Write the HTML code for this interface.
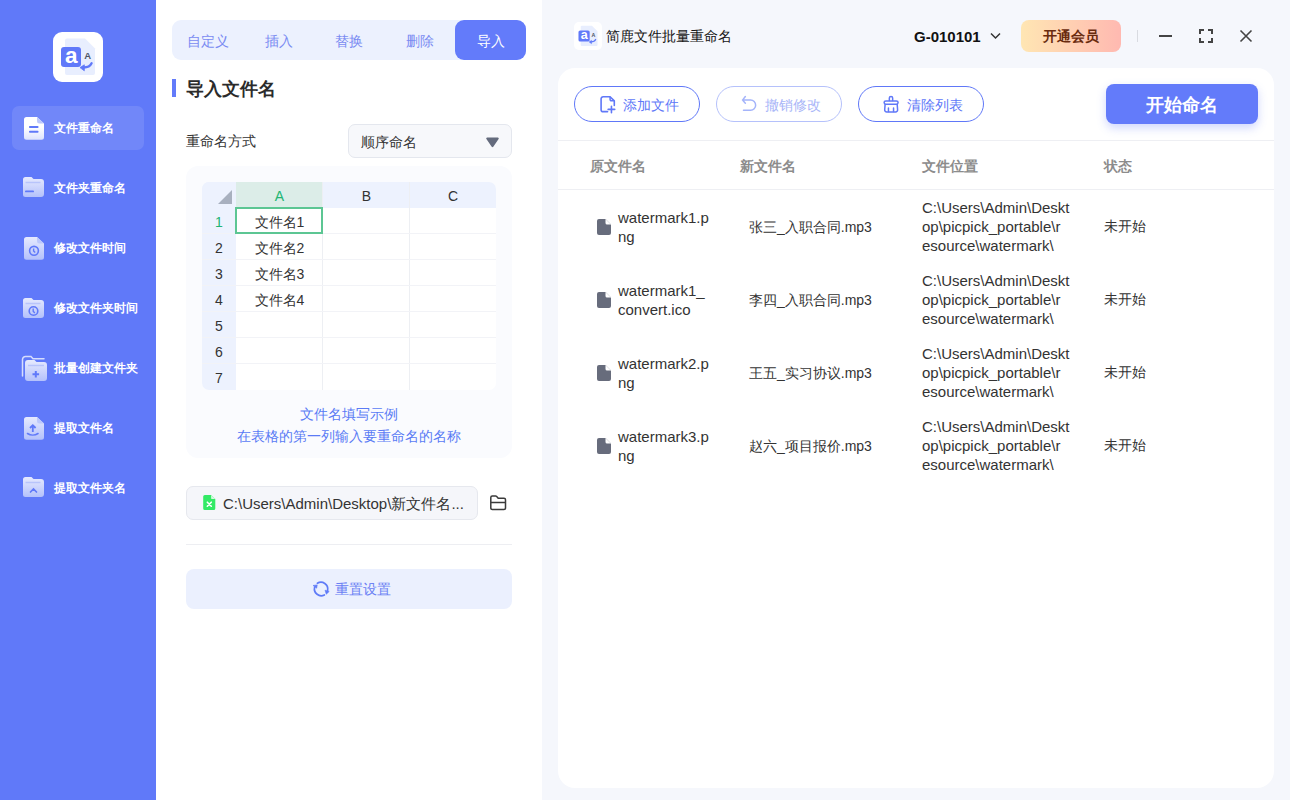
<!DOCTYPE html>
<html><head><meta charset="utf-8">
<style>
*{box-sizing:border-box;margin:0;padding:0}
html,body{width:1290px;height:800px;overflow:hidden;background:#fff}
body{font-family:"Liberation Sans",sans-serif;font-size:14px;color:#333;position:relative}
.abs{position:absolute}
.t{position:absolute;white-space:nowrap;line-height:1}
#side{left:0;top:0;width:156px;height:800px;background:#6079F9}
#mid{left:156px;top:0;width:386px;height:800px;background:#fff}
#right{left:542px;top:0;width:748px;height:800px;background:#F5F7FC}
.mi{position:absolute;left:12px;width:132px;height:44px;border-radius:7px}
.mi .lbl{position:absolute;left:42px;top:0;line-height:44px;color:#fff;font-weight:bold;font-size:12px;white-space:nowrap}
.mi svg{position:absolute;left:10px;top:10px}
.cellc{position:absolute;height:26px;line-height:28px;text-align:center;font-size:14px;color:#333;white-space:nowrap}
.btn{position:absolute;top:86px;width:126px;height:36px;border:1px solid #6078F8;border-radius:18px;color:#6078F8}
.btn.dis{border-color:#B5C1FB;color:#A9B6F8}
.bl{position:absolute;top:1px;line-height:34px;font-size:14px;white-space:nowrap}
.th{top:156px;font-size:14px;font-weight:bold;color:#8C8C8C;line-height:20px}
.td{position:absolute;white-space:nowrap;font-size:15px;line-height:19px;color:#333}
.tab{position:absolute;top:21px;height:40px;line-height:40px;text-align:center;color:#7A8BF2;font-size:14px}
</style></head><body>

<!-- SIDEBAR -->
<div id="side" class="abs">
  <div class="abs" style="left:53px;top:32px;width:50px;height:50px;background:#fff;border-radius:9px">
    <svg width="50" height="50" viewBox="0 0 50 50" style="position:absolute;left:0;top:0">
      <path d="M14 6.5h18l10 10V41a2 2 0 0 1-2 2H14a2 2 0 0 1-2-2V8.5a2 2 0 0 1 2-2z" fill="#E8EEFE"/>
      <rect x="8" y="15" width="20" height="20" rx="3" fill="#6079F9"/>
      <text x="18.2" y="31" text-anchor="middle" font-family="Liberation Sans" font-weight="bold" font-size="22.5" fill="#fff">a</text>
      <text x="34.6" y="26.8" text-anchor="middle" font-family="Liberation Sans" font-weight="bold" font-size="9.5" fill="#4F5565">A</text>
      <path d="M38.6 31.2c-1.2 2.6-3.8 4.2-8 4.3" stroke="#6079F9" stroke-width="2.3" fill="none" stroke-linecap="round"/>
      <path d="M27 35.6l4.3-2.8v6z" fill="#6079F9" stroke="#6079F9" stroke-width="0.8" stroke-linejoin="round"/>
    </svg>
  </div>

  <div class="mi" style="top:106px;background:rgba(255,255,255,0.11)">
    <svg width="24" height="26" viewBox="0 0 24 26" style="left:11px;top:10px">
      <defs><linearGradient id="gw" x1="0" y1="0" x2="0" y2="1"><stop offset="0.45" stop-color="#fff"/><stop offset="1" stop-color="#DDE3FD"/></linearGradient></defs>
      <path d="M3.5 1h10.5l7 6.5V21.3a2.5 2.5 0 0 1-2.5 2.5H3.5A2.5 2.5 0 0 1 1 21.3V3.5A2.5 2.5 0 0 1 3.5 1z" fill="url(#gw)"/>
      <path d="M14 1v4a2.5 2.5 0 0 0 2.5 2.5H21z" fill="#BCC8FC"/>
      <rect x="6" y="10" width="9.5" height="2" rx="0.8" fill="#6079F9"/>
      <rect x="6" y="14.8" width="9.5" height="2" rx="0.8" fill="#6079F9"/>
    </svg>
    <div class="lbl">文件重命名</div>
  </div>

  <div class="mi" style="top:166px">
    <svg width="24" height="24" viewBox="0 0 24 24" style="left:10px;top:10px">
      <defs><linearGradient id="gf" x1="0" y1="0" x2="0" y2="1"><stop offset="0" stop-color="#E6EAFE"/><stop offset="1" stop-color="#B4C1FB"/></linearGradient></defs>
      <path d="M3 1h6.5l2 2H19a3 3 0 0 1 3 3V18a3 3 0 0 1-3 3H3.5A2.5 2.5 0 0 1 1 18.5V3.5A2.5 2.5 0 0 1 3.5 1z" fill="url(#gf)"/>
      <path d="M3.5 6.5h15" stroke="#B8C4FB" stroke-width="1.5"/>
      <rect x="3" y="14.5" width="9" height="1.8" rx="0.9" fill="#6079F9"/>
    </svg>
    <div class="lbl">文件夹重命名</div>
  </div>

  <div class="mi" style="top:226px">
    <svg width="24" height="26" viewBox="0 0 24 26" style="left:11px;top:10px">
      <path d="M3.5 1h10.5l7 6.5V21.3a2.5 2.5 0 0 1-2.5 2.5H3.5A2.5 2.5 0 0 1 1 21.3V3.5A2.5 2.5 0 0 1 3.5 1z" fill="url(#gf)"/>
      <path d="M14 1v4a2.5 2.5 0 0 0 2.5 2.5H21z" fill="#BCC8FC"/>
      <circle cx="11" cy="14.8" r="4.4" stroke="#6079F9" stroke-width="1.6" fill="none"/>
      <path d="M10.6 12.4v2.6l1.6 1.6" stroke="#6079F9" stroke-width="1.4" fill="none"/>
    </svg>
    <div class="lbl">修改文件时间</div>
  </div>

  <div class="mi" style="top:286px">
    <svg width="24" height="24" viewBox="0 0 24 24" style="left:10px;top:11px">
      <path d="M3 1h6.5l2 2H19a3 3 0 0 1 3 3V18a3 3 0 0 1-3 3H3.5A2.5 2.5 0 0 1 1 18.5V3.5A2.5 2.5 0 0 1 3.5 1z" fill="url(#gf)"/>
      <path d="M3.5 6.5h15" stroke="#B8C4FB" stroke-width="1.5"/>
      <circle cx="11.5" cy="14" r="4.3" stroke="#6079F9" stroke-width="1.6" fill="none"/>
      <path d="M11.2 11.5v2.8l1.6 1.6" stroke="#6079F9" stroke-width="1.4" fill="none"/>
    </svg>
    <div class="lbl">修改文件夹时间</div>
  </div>

  <div class="mi" style="top:346px">
    <svg width="28" height="28" viewBox="0 0 28 28" style="left:9px;top:8px">
      <path d="M1.5 22V5.5a3 3 0 0 1 3-3h5.5l2 2.2H23" stroke="#D6DDFD" stroke-width="1.5" fill="none" stroke-linecap="round"/>
      <path d="M7 6h6.5l2 2H23a3 3 0 0 1 3 3V24a3 3 0 0 1-3 3H7a3 3 0 0 1-3-3V9a3 3 0 0 1 3-3z" fill="url(#gf)"/>
      <path d="M7 11.5h16" stroke="#B8C4FB" stroke-width="1.5"/>
      <path d="M14.8 17v6.6M11.5 20.3h6.6" stroke="#6079F9" stroke-width="2"/>
    </svg>
    <div class="lbl">批量创建文件夹</div>
  </div>

  <div class="mi" style="top:406px">
    <svg width="24" height="26" viewBox="0 0 24 26" style="left:11px;top:10px">
      <path d="M3.5 1h10.5l7 6.5V21.3a2.5 2.5 0 0 1-2.5 2.5H3.5A2.5 2.5 0 0 1 1 21.3V3.5A2.5 2.5 0 0 1 3.5 1z" fill="url(#gf)"/>
      <path d="M14 1v4a2.5 2.5 0 0 0 2.5 2.5H21z" fill="#BCC8FC"/>
      <path d="M9.8 16V9.5M7 12l2.8-2.8 2.8 2.8" stroke="#6079F9" stroke-width="1.8" fill="none"/>
      <path d="M4.5 17.5c3 2 7.5 2 10.5 0" stroke="#6079F9" stroke-width="1.6" fill="none" stroke-linecap="round"/>
    </svg>
    <div class="lbl">提取文件名</div>
  </div>

  <div class="mi" style="top:466px">
    <svg width="24" height="24" viewBox="0 0 24 24" style="left:10px;top:10px">
      <path d="M3 1h6.5l2 2H19a3 3 0 0 1 3 3V18a3 3 0 0 1-3 3H3.5A2.5 2.5 0 0 1 1 18.5V3.5A2.5 2.5 0 0 1 3.5 1z" fill="url(#gf)"/>
      <path d="M3.5 6.5h15" stroke="#B8C4FB" stroke-width="1.5"/>
      <path d="M8.5 16l3-3 3 3" stroke="#6079F9" stroke-width="1.7" fill="none" stroke-linecap="round"/>
    </svg>
    <div class="lbl">提取文件夹名</div>
  </div>
</div>

<!-- MIDDLE -->
<div id="mid" class="abs"></div>
<!-- tabs -->
<div class="abs" style="left:172px;top:20px;width:354px;height:40px;background:#ECF1FE;border-radius:9px"></div>
<div class="abs" style="left:455px;top:20px;width:71px;height:40px;background:#637BFA;border-radius:9px"></div>
<div class="tab" style="left:172px;width:71px">自定义</div>
<div class="tab" style="left:243px;width:71px">插入</div>
<div class="tab" style="left:313px;width:71px">替换</div>
<div class="tab" style="left:384px;width:71px">删除</div>
<div class="tab" style="left:455px;width:71px;color:#fff">导入</div>
<!-- section title -->
<div class="abs" style="left:172px;top:79px;width:4px;height:18px;background:#637BFA"></div>
<div class="t" style="left:186px;top:79px;font-size:18px;font-weight:bold;color:#2B2B2B;line-height:20px">导入文件名</div>
<!-- rename mode -->
<div class="t" style="left:186px;top:131px;font-size:14px;color:#333;line-height:20px">重命名方式</div>
<div class="abs" style="left:348px;top:124px;width:164px;height:34px;background:#F7F8FB;border:1px solid #E4E7EE;border-radius:7px"></div>
<div class="t" style="left:361px;top:132px;font-size:14px;color:#333;line-height:20px">顺序命名</div>
<svg class="abs" style="left:486px;top:137px" width="13" height="11" viewBox="0 0 13 11"><path d="M1.2 0.5h10.6c0.8 0 1.2 0.8 0.8 1.5L7.3 9.8c-0.4 0.6-1.2 0.6-1.6 0L0.4 2C0 1.3 0.4 0.5 1.2 0.5z" fill="#646B7D"/></svg>
<!-- example card -->
<div class="abs" style="left:186px;top:166px;width:326px;height:292px;background:#FAFBFE;border-radius:12px"></div>
<div class="abs" id="sheet" style="left:202px;top:182px;width:294px;height:208px;background:#fff;border-radius:7px;overflow:hidden">
  <div class="abs" style="left:0;top:0;width:294px;height:26px;background:#EDF2FE"></div>
  <div class="abs" style="left:0;top:0;width:34px;height:208px;background:#EDF2FE"></div>
  <div class="abs" style="left:34px;top:0;width:87px;height:26px;background:#DCEDE8"></div>
  <svg class="abs" style="left:16px;top:8px" width="14" height="14" viewBox="0 0 14 14"><path d="M14 0V14H0z" fill="#A8B0BF"/></svg>
  <!-- grid lines -->
  <div class="abs" style="left:120px;top:0;width:1px;height:208px;background:#EDEFF3"></div>
  <div class="abs" style="left:207px;top:0;width:1px;height:208px;background:#EDEFF3"></div>
  <div class="abs" style="left:0;top:51px;width:294px;height:1px;background:#F2F3F7"></div>
  <div class="abs" style="left:0;top:77px;width:294px;height:1px;background:#F2F3F7"></div>
  <div class="abs" style="left:0;top:103px;width:294px;height:1px;background:#F2F3F7"></div>
  <div class="abs" style="left:0;top:129px;width:294px;height:1px;background:#F2F3F7"></div>
  <div class="abs" style="left:0;top:155px;width:294px;height:1px;background:#F2F3F7"></div>
  <div class="abs" style="left:0;top:181px;width:294px;height:1px;background:#F2F3F7"></div>
  <div class="abs" style="left:33px;top:25px;width:88px;height:27px;border:2px solid #5CC693"></div>
  <div class="cellc" style="left:34px;top:0;width:87px;color:#22B573">A</div>
  <div class="cellc" style="left:121px;top:0;width:87px">B</div>
  <div class="cellc" style="left:208px;top:0;width:86px">C</div>
  <div class="cellc" style="left:0;top:26px;width:34px;color:#22B573">1</div>
  <div class="cellc" style="left:0;top:52px;width:34px">2</div>
  <div class="cellc" style="left:0;top:78px;width:34px">3</div>
  <div class="cellc" style="left:0;top:104px;width:34px">4</div>
  <div class="cellc" style="left:0;top:130px;width:34px">5</div>
  <div class="cellc" style="left:0;top:156px;width:34px">6</div>
  <div class="cellc" style="left:0;top:182px;width:34px">7</div>
  <div class="cellc" style="left:34px;top:26px;width:87px">文件名1</div>
  <div class="cellc" style="left:34px;top:52px;width:87px">文件名2</div>
  <div class="cellc" style="left:34px;top:78px;width:87px">文件名3</div>
  <div class="cellc" style="left:34px;top:104px;width:87px">文件名4</div>
</div>
<div class="t" style="left:186px;top:404px;width:326px;text-align:center;color:#5B7BF5;font-size:14px;line-height:20px">文件名填写示例</div>
<div class="t" style="left:186px;top:426px;width:326px;text-align:center;color:#5B7BF5;font-size:14px;line-height:20px">在表格的第一列输入要重命名的名称</div>
<!-- path -->
<div class="abs" style="left:186px;top:486px;width:292px;height:34px;background:#F5F6FA;border:1px solid #E6E8EE;border-radius:7px"></div>
<svg class="abs" style="left:197px;top:491px" width="24" height="24" viewBox="0 0 24 24"><path d="M7.8 3.9H14.1L18.3 8.1V17.4a1.6 1.6 0 0 1-1.6 1.6H7.8a1.6 1.6 0 0 1-1.6-1.6V5.5a1.6 1.6 0 0 1 1.6-1.6z" fill="#33EA66"/><path d="M14.1 3.9V6.9a1.2 1.2 0 0 0 1.2 1.2H18.3z" fill="#D6F9E0"/><path d="M10.3 11.2L14.3 15.2M14.3 11.2L10.3 15.2" stroke="#fff" stroke-width="1.6" stroke-linecap="round"/></svg>
<div class="t" style="left:223px;top:494px;font-size:15px;color:#333;line-height:20px">C:\Users\Admin\Desktop\新文件名...</div>
<svg class="abs" style="left:486px;top:491px" width="24" height="24" viewBox="0 0 24 24"><path d="M4.8 17.1V6.6a1.5 1.5 0 0 1 1.5-1.5H9.6a1.5 1.5 0 0 1 1.1 0.5l1.5 1.75H18a1.5 1.5 0 0 1 1.5 1.5V17.1a1.5 1.5 0 0 1-1.5 1.5H6.3a1.5 1.5 0 0 1-1.5-1.5zM4.8 11.4H19.5" stroke="#3A3A3A" stroke-width="1.5" fill="none" stroke-linejoin="round"/></svg>
<div class="abs" style="left:186px;top:544px;width:326px;height:1px;background:#EDEEF2"></div>
<!-- reset -->
<div class="abs" style="left:186px;top:569px;width:326px;height:40px;background:#EBF0FE;border-radius:8px"></div>
<svg class="abs" style="left:309px;top:577px" width="24" height="24" viewBox="0 0 24 24"><g stroke="#5F7BF7" stroke-width="1.7" fill="none" stroke-linecap="round"><path d="M8.4 6.3A6.8 6.8 0 0 1 18.6 13.4"/><path d="M15.4 17.9A6.8 6.8 0 0 1 5.6 10.4"/></g><path d="M16 13.2L20.2 14.4 17.3 17.2z" fill="#5F7BF7" stroke="#5F7BF7" stroke-width="0.6" stroke-linejoin="round"/><path d="M4 8.5L8.2 7.9 7.7 11.2z" fill="#5F7BF7" stroke="#5F7BF7" stroke-width="0.6" stroke-linejoin="round"/></svg>
<div class="t" style="left:335px;top:579px;font-size:14px;color:#6A80F4;line-height:20px">重置设置</div>


<!-- RIGHT -->
<div id="right" class="abs"></div>
<!-- title bar -->
<div class="abs" style="left:574px;top:22px;width:28px;height:28px;background:#fff;border-radius:5px">
  <svg width="28" height="28" viewBox="0 0 50 50" style="position:absolute;left:0;top:0">
    <path d="M14 6.5h18l10 10V41a2 2 0 0 1-2 2H14a2 2 0 0 1-2-2V8.5a2 2 0 0 1 2-2z" fill="#E8EEFE"/>
    <rect x="8" y="15" width="20" height="20" rx="3" fill="#6079F9"/>
    <text x="18.2" y="31" text-anchor="middle" font-family="Liberation Sans" font-weight="bold" font-size="22.5" fill="#fff">a</text>
    <text x="34.6" y="26.8" text-anchor="middle" font-family="Liberation Sans" font-weight="bold" font-size="9.5" fill="#4F5565">A</text>
    <path d="M38.6 31.2c-1.2 2.6-3.8 4.2-8 4.3" stroke="#6079F9" stroke-width="2.3" fill="none" stroke-linecap="round"/>
    <path d="M27 35.6l4.3-2.8v6z" fill="#6079F9" stroke="#6079F9" stroke-width="0.8" stroke-linejoin="round"/>
  </svg>
</div>
<div class="t" style="left:606px;top:26px;font-size:14px;color:#151515;line-height:20px">简鹿文件批量重命名</div>
<div class="t" style="left:914px;top:27px;font-size:15px;color:#111;font-weight:bold;line-height:20px">G-010101</div>
<svg class="abs" style="left:990px;top:32px" width="11" height="8" viewBox="0 0 11 8"><path d="M1 1.5l4.5 4.5 4.5-4.5" stroke="#333" stroke-width="1.5" fill="none"/></svg>
<div class="abs" style="left:1021px;top:20px;width:100px;height:32px;border-radius:8px;background:linear-gradient(90deg,#FFE6B3,#FFB9B1)"></div>
<div class="t" style="left:1021px;top:26px;width:100px;text-align:center;font-size:14px;color:#6A2B0E;font-weight:bold;line-height:20px">开通会员</div>
<div class="abs" style="left:1137px;top:30px;width:1px;height:12px;background:#D9DBE1"></div>
<div class="abs" style="left:1159px;top:35px;width:13px;height:2px;background:#444"></div>
<svg class="abs" style="left:1198px;top:28px" width="16" height="16" viewBox="0 0 16 16"><path d="M2 6V2h4M10 2h4v4M14 10v4h-4M6 14H2v-4" stroke="#444" stroke-width="2" fill="none"/></svg>
<svg class="abs" style="left:1239px;top:29px" width="14" height="14" viewBox="0 0 14 14"><path d="M1.5 1.5l11 11M12.5 1.5l-11 11" stroke="#444" stroke-width="1.6" fill="none"/></svg>
<!-- main card -->
<div class="abs" style="left:558px;top:68px;width:716px;height:720px;background:#fff;border-radius:17px"></div>
<div class="btn" style="left:574px">
  <svg class="abs" style="left:21px;top:5px" width="24" height="24" viewBox="0 0 24 24"><path d="M11.55 19.65H7.1a2 2 0 0 1-2-2V6.8a2 2 0 0 1 2-2H14.1L18.3 8.9V13.5" stroke="#6078F8" stroke-width="1.6" fill="none" stroke-linejoin="round" stroke-linecap="round"/><path d="M14.1 4.8V7.5a1.2 1.2 0 0 0 1.2 1.2H18.3" stroke="#6078F8" stroke-width="1.5" fill="none"/><path d="M15.45 14.25V20.7M12.15 17.4H18.75" stroke="#6078F8" stroke-width="1.6" stroke-linecap="round"/></svg>
  <div class="bl" style="left:48px">添加文件</div>
</div>
<div class="btn dis" style="left:716px">
  <svg class="abs" style="left:21px;top:5px" width="24" height="24" viewBox="0 0 24 24"><path d="M7.35 4.5L4.5 8.1 7.35 11.25M4.5 8.1H12.6A5.05 5.05 0 0 1 12.6 18.2H5.5" stroke="#A4B4FA" stroke-width="1.5" fill="none" stroke-linecap="round" stroke-linejoin="round"/></svg>
  <div class="bl" style="left:48px">撤销修改</div>
</div>
<div class="btn" style="left:858px">
  <svg class="abs" style="left:20px;top:5px" width="24" height="24" viewBox="0 0 24 24"><g stroke="#6078F8" stroke-width="1.5" fill="none" stroke-linecap="round" stroke-linejoin="round"><path d="M10.35 8.6V6.1a1.65 1.65 0 0 1 3.3 0V8.6"/><rect x="5.1" y="8.9" width="14" height="3.4" rx="1.7"/><path d="M6.1 12.4L5.7 17.8a2 2 0 0 0 2 2.2H16.6a2 2 0 0 0 2-2.2L18.2 12.4"/><path d="M9.45 15.9V19.6M14.55 15.9V19.6"/></g></svg>
  <div class="bl" style="left:48px">清除列表</div>
</div>
<div class="abs" style="left:1106px;top:84px;width:152px;height:40px;background:#637BFA;border-radius:8px;box-shadow:0 4px 10px rgba(99,123,250,0.3)"></div>
<div class="t" style="left:1106px;top:95px;width:152px;text-align:center;font-size:18px;color:#fff;font-weight:bold;line-height:20px">开始命名</div>
<div class="abs" style="left:558px;top:140px;width:716px;height:1px;background:#EEEFF3"></div>
<div class="t th" style="left:590px">原文件名</div>
<div class="t th" style="left:740px">新文件名</div>
<div class="t th" style="left:922px">文件位置</div>
<div class="t th" style="left:1104px">状态</div>
<div class="abs" style="left:558px;top:189px;width:716px;height:1px;background:#EEEFF3"></div>
<svg class="abs" style="left:597px;top:219.0px" width="14" height="16" viewBox="0 0 14 16"><path d="M2 0h6.5L14 5.5V14a2 2 0 0 1-2 2H2a2 2 0 0 1-2-2V2a2 2 0 0 1 2-2z" fill="#676C7C"/><path d="M8.5 0v4a1.5 1.5 0 0 0 1.5 1.5H14z" fill="#fff"/></svg>
<div class="td" style="left:618px;top:207.5px">watermark1.p<br>ng</div>
<div class="td" style="left:749px;top:218.0px;font-size:14px">张三_入职合同.mp3</div>
<div class="td" style="left:922px;top:198.0px">C:\Users\Admin\Deskt<br>op\picpick_portable\r<br>esource\watermark\</div>
<div class="td" style="left:1104px;top:217.0px;font-size:14px">未开始</div>
<svg class="abs" style="left:597px;top:292.0px" width="14" height="16" viewBox="0 0 14 16"><path d="M2 0h6.5L14 5.5V14a2 2 0 0 1-2 2H2a2 2 0 0 1-2-2V2a2 2 0 0 1 2-2z" fill="#676C7C"/><path d="M8.5 0v4a1.5 1.5 0 0 0 1.5 1.5H14z" fill="#fff"/></svg>
<div class="td" style="left:618px;top:280.5px">watermark1_<br>convert.ico</div>
<div class="td" style="left:749px;top:291.0px;font-size:14px">李四_入职合同.mp3</div>
<div class="td" style="left:922px;top:271.0px">C:\Users\Admin\Deskt<br>op\picpick_portable\r<br>esource\watermark\</div>
<div class="td" style="left:1104px;top:290.0px;font-size:14px">未开始</div>
<svg class="abs" style="left:597px;top:365.0px" width="14" height="16" viewBox="0 0 14 16"><path d="M2 0h6.5L14 5.5V14a2 2 0 0 1-2 2H2a2 2 0 0 1-2-2V2a2 2 0 0 1 2-2z" fill="#676C7C"/><path d="M8.5 0v4a1.5 1.5 0 0 0 1.5 1.5H14z" fill="#fff"/></svg>
<div class="td" style="left:618px;top:353.5px">watermark2.p<br>ng</div>
<div class="td" style="left:749px;top:364.0px;font-size:14px">王五_实习协议.mp3</div>
<div class="td" style="left:922px;top:344.0px">C:\Users\Admin\Deskt<br>op\picpick_portable\r<br>esource\watermark\</div>
<div class="td" style="left:1104px;top:363.0px;font-size:14px">未开始</div>
<svg class="abs" style="left:597px;top:438.0px" width="14" height="16" viewBox="0 0 14 16"><path d="M2 0h6.5L14 5.5V14a2 2 0 0 1-2 2H2a2 2 0 0 1-2-2V2a2 2 0 0 1 2-2z" fill="#676C7C"/><path d="M8.5 0v4a1.5 1.5 0 0 0 1.5 1.5H14z" fill="#fff"/></svg>
<div class="td" style="left:618px;top:426.5px">watermark3.p<br>ng</div>
<div class="td" style="left:749px;top:437.0px;font-size:14px">赵六_项目报价.mp3</div>
<div class="td" style="left:922px;top:417.0px">C:\Users\Admin\Deskt<br>op\picpick_portable\r<br>esource\watermark\</div>
<div class="td" style="left:1104px;top:436.0px;font-size:14px">未开始</div>


</body></html>
